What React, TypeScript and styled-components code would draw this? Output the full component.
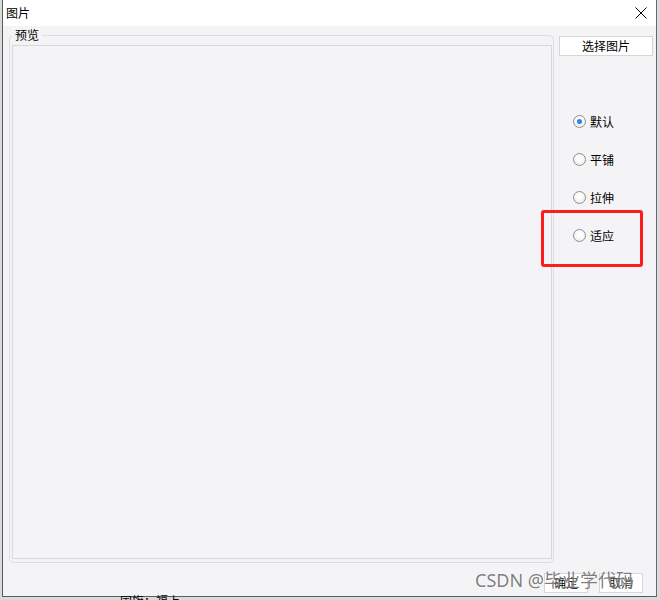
import styled, {createGlobalStyle} from 'styled-components';

const GlobalStyle = createGlobalStyle`
  html, body {
    margin: 0;
    padding: 0;
    background: #d3d5d8;
  }
  body {
    font-family: 'Noto Sans CJK SC', 'Noto Sans', sans-serif;
    font-size: 12px;
    color: #000;
  }
`;

const Screen = styled.div`
  position: relative;
  width: 660px;
  height: 600px;
  overflow: hidden;
  background: #d9dadc;
`;

const Window = styled.div`
  margin-left: 2px;
  width: 655px;
  height: 597px;
  box-sizing: border-box;
  border-left: 1px solid #5c5c5c;
  border-right: 1px solid #6a6a6a;
  border-bottom: 1px solid #5c5c5c;
  background: #f4f4f6;
  display: flex;
  flex-direction: column;
`;

const TitleBar = styled.div`
  height: 26px;
  background: #fff;
  display: flex;
  align-items: center;
  justify-content: space-between;
  padding: 0 8px 0 3px;
  flex-shrink: 0;
`;

const Title = styled.span`
  font-size: 12px;
  line-height: 14px;
`;

const CloseBtn = styled.div`
  width: 14px;
  height: 14px;
  display: flex;
  align-items: center;
  justify-content: center;
`;

const Body = styled.div`
  flex: 1;
  display: flex;
  flex-direction: column;
  padding: 9px 4px 4px 6px;
`;

const MainRow = styled.div`
  display: flex;
  gap: 5px;
`;

const GroupBox = styled.div`
  position: relative;
  width: 545px;
  height: 528px;
  box-sizing: border-box;
  border: 1px solid #dedee2;
  border-radius: 5px;
  padding: 9px 1px 3px 2px;
`;

const GroupLabel = styled.span`
  position: absolute;
  left: 2px;
  top: -8px;
  padding: 0 3px;
  background: #f4f4f6;
  font-size: 12px;
  line-height: 14px;
`;

const Preview = styled.div`
  width: 540px;
  height: 514px;
  box-sizing: border-box;
  border: 1px solid #d8d8dc;
  background: #f4f4f6;
`;

const SideColumn = styled.div`
  display: flex;
  flex-direction: column;
  padding-top: 1px;
`;

const PlainButton = styled.button<{$w: number}>`
  width: ${p => p.$w}px;
  height: 20px;
  box-sizing: border-box;
  border: 1px solid #d6d6d6;
  background: #fff;
  font-family: 'Noto Sans CJK SC', sans-serif;
  font-size: 12px;
  line-height: 16px;
  padding: 0;
  color: #000;
`;

const RadioList = styled.div`
  display: flex;
  flex-direction: column;
  gap: 25px;
  padding: 59px 0 0 14px;
`;

const RadioRow = styled.label`
  display: flex;
  align-items: center;
  gap: 4px;
  height: 13px;
  font-size: 12px;
`;

const Circle = styled.span<{$on?: boolean}>`
  width: 13px;
  height: 13px;
  box-sizing: border-box;
  border-radius: 50%;
  border: 1px solid #8e8f8f;
  background: radial-gradient(circle at 50% 40%, #ffffff 20%, #e6e6e6 100%);
  display: flex;
  align-items: center;
  justify-content: center;
  &::after {
    content: '';
    display: ${p => (p.$on ? 'block' : 'none')};
    width: 5px;
    height: 5px;
    border-radius: 50%;
    background: #2f80ed;
  }
`;

const Footer = styled.div`
  margin-top: 10px;
  display: flex;
  justify-content: flex-end;
  gap: 11px;
  padding-right: 9px;
`;

const Highlight = styled.div`
  position: absolute;
  left: 541px;
  top: 210px;
  width: 102px;
  height: 57px;
  box-sizing: border-box;
  border: 3px solid #fa1e1e;
  border-radius: 3px;
`;

const Watermark = styled.div`
  position: absolute;
  left: 475px;
  top: 569px;
  font-family: 'Noto Sans', 'Noto Sans CJK SC', sans-serif;
  font-size: 18px;
  line-height: 22px;
  color: rgba(90, 90, 90, 0.78);
  text-shadow: 0 0 2px rgba(255, 255, 255, 0.9);
  white-space: nowrap;
`;

const BehindText = styled.div`
  position: absolute;
  left: 120px;
  top: 592px;
  font-size: 12px;
  color: #000;
`;

const options = ['默认', '平铺', '拉伸', '适应'];

const App = () => {
  return (
    <>
      <GlobalStyle />
      <Screen>
        <BehindText>国旗：福上</BehindText>
        <Window>
          <TitleBar>
            <Title>图片</Title>
            <CloseBtn>
              <svg width="12" height="12" viewBox="0 0 12 12">
                <path d="M0.5 0.5 L11.5 11.5 M11.5 0.5 L0.5 11.5" stroke="#000" strokeWidth="1" />
              </svg>
            </CloseBtn>
          </TitleBar>
          <Body>
            <MainRow>
              <GroupBox>
                <GroupLabel>预览</GroupLabel>
                <Preview />
              </GroupBox>
              <SideColumn>
                <PlainButton $w={94}>选择图片</PlainButton>
                <RadioList>
                  {options.map((o, i) => (
                    <RadioRow key={o}>
                      <Circle $on={i === 0} />
                      {o}
                    </RadioRow>
                  ))}
                </RadioList>
              </SideColumn>
            </MainRow>
            <Footer>
              <PlainButton $w={44}>确定</PlainButton>
              <PlainButton $w={44}>取消</PlainButton>
            </Footer>
          </Body>
        </Window>
        <Highlight />
        <Watermark>CSDN @毕业学代码</Watermark>
      </Screen>
    </>
  );
};

export default App;
